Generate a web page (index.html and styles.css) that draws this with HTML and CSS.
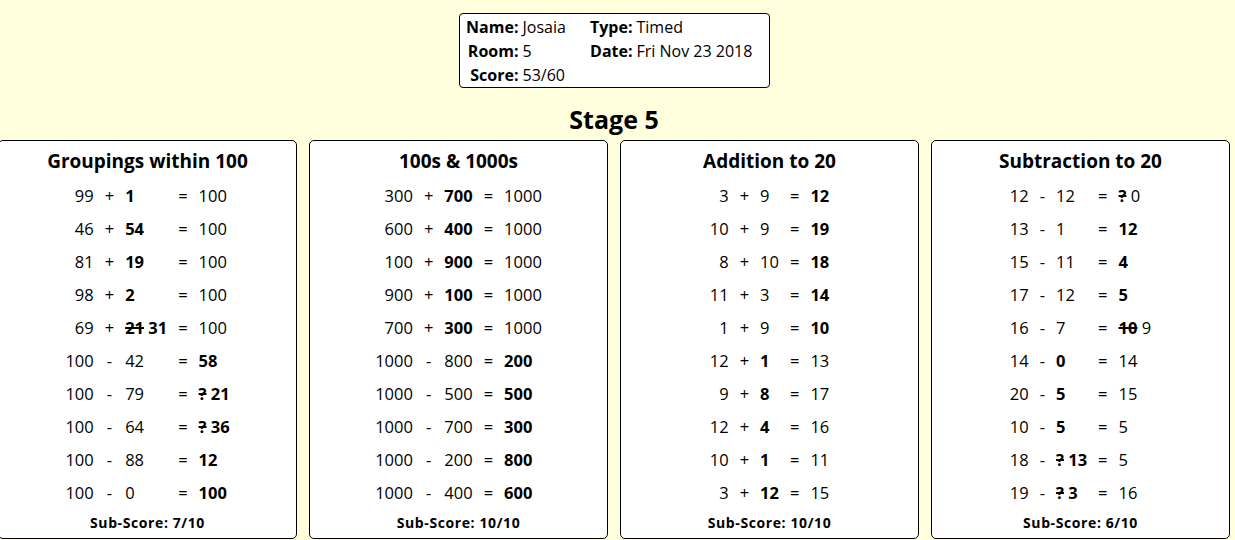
FILE: index.html
```html
<!DOCTYPE html>
<html lang="en">
<head>
<meta charset="utf-8">
<title>Stage 5 results</title>
<link rel="stylesheet" href="styles.css">
</head>
<body>
<div class="page">
  <div class="info">
    <span class="lbl">Name:</span><span class="val">Josaia</span><span class="lbl">Type:</span><span class="val">Timed</span>
    <span class="lbl">Room:</span><span class="val">5</span><span class="lbl">Date:</span><span class="val">Fri Nov 23 2018</span>
    <span class="lbl">Score:</span><span class="val">53/60</span><span></span><span></span>
  </div>
  <h1 class="stage">Stage 5</h1>
  <div class="cards">
    <section class="card">
      <h2 class="title">Groupings within 100</h2>
      <div class="sums">
        <span class="a">99</span><span class="op">+</span><span class="b"><b>1</b></span><span class="eq">=</span><span class="c">100</span>
        <span class="a">46</span><span class="op">+</span><span class="b"><b>54</b></span><span class="eq">=</span><span class="c">100</span>
        <span class="a">81</span><span class="op">+</span><span class="b"><b>19</b></span><span class="eq">=</span><span class="c">100</span>
        <span class="a">98</span><span class="op">+</span><span class="b"><b>2</b></span><span class="eq">=</span><span class="c">100</span>
        <span class="a">69</span><span class="op">+</span><span class="b"><b><s>21</s> 31</b></span><span class="eq">=</span><span class="c">100</span>
        <span class="a">100</span><span class="op">-</span><span class="b">42</span><span class="eq">=</span><span class="c"><b>58</b></span>
        <span class="a">100</span><span class="op">-</span><span class="b">79</span><span class="eq">=</span><span class="c"><b><s>?</s> 21</b></span>
        <span class="a">100</span><span class="op">-</span><span class="b">64</span><span class="eq">=</span><span class="c"><b><s>?</s> 36</b></span>
        <span class="a">100</span><span class="op">-</span><span class="b">88</span><span class="eq">=</span><span class="c"><b>12</b></span>
        <span class="a">100</span><span class="op">-</span><span class="b">0</span><span class="eq">=</span><span class="c"><b>100</b></span>
      </div>
      <p class="sub">Sub-Score: 7/10</p>
    </section>
    <section class="card">
      <h2 class="title">100s &amp; 1000s</h2>
      <div class="sums">
        <span class="a">300</span><span class="op">+</span><span class="b"><b>700</b></span><span class="eq">=</span><span class="c">1000</span>
        <span class="a">600</span><span class="op">+</span><span class="b"><b>400</b></span><span class="eq">=</span><span class="c">1000</span>
        <span class="a">100</span><span class="op">+</span><span class="b"><b>900</b></span><span class="eq">=</span><span class="c">1000</span>
        <span class="a">900</span><span class="op">+</span><span class="b"><b>100</b></span><span class="eq">=</span><span class="c">1000</span>
        <span class="a">700</span><span class="op">+</span><span class="b"><b>300</b></span><span class="eq">=</span><span class="c">1000</span>
        <span class="a">1000</span><span class="op">-</span><span class="b">800</span><span class="eq">=</span><span class="c"><b>200</b></span>
        <span class="a">1000</span><span class="op">-</span><span class="b">500</span><span class="eq">=</span><span class="c"><b>500</b></span>
        <span class="a">1000</span><span class="op">-</span><span class="b">700</span><span class="eq">=</span><span class="c"><b>300</b></span>
        <span class="a">1000</span><span class="op">-</span><span class="b">200</span><span class="eq">=</span><span class="c"><b>800</b></span>
        <span class="a">1000</span><span class="op">-</span><span class="b">400</span><span class="eq">=</span><span class="c"><b>600</b></span>
      </div>
      <p class="sub">Sub-Score: 10/10</p>
    </section>
    <section class="card">
      <h2 class="title">Addition to 20</h2>
      <div class="sums">
        <span class="a">3</span><span class="op">+</span><span class="b">9</span><span class="eq">=</span><span class="c"><b>12</b></span>
        <span class="a">10</span><span class="op">+</span><span class="b">9</span><span class="eq">=</span><span class="c"><b>19</b></span>
        <span class="a">8</span><span class="op">+</span><span class="b">10</span><span class="eq">=</span><span class="c"><b>18</b></span>
        <span class="a">11</span><span class="op">+</span><span class="b">3</span><span class="eq">=</span><span class="c"><b>14</b></span>
        <span class="a">1</span><span class="op">+</span><span class="b">9</span><span class="eq">=</span><span class="c"><b>10</b></span>
        <span class="a">12</span><span class="op">+</span><span class="b"><b>1</b></span><span class="eq">=</span><span class="c">13</span>
        <span class="a">9</span><span class="op">+</span><span class="b"><b>8</b></span><span class="eq">=</span><span class="c">17</span>
        <span class="a">12</span><span class="op">+</span><span class="b"><b>4</b></span><span class="eq">=</span><span class="c">16</span>
        <span class="a">10</span><span class="op">+</span><span class="b"><b>1</b></span><span class="eq">=</span><span class="c">11</span>
        <span class="a">3</span><span class="op">+</span><span class="b"><b>12</b></span><span class="eq">=</span><span class="c">15</span>
      </div>
      <p class="sub">Sub-Score: 10/10</p>
    </section>
    <section class="card">
      <h2 class="title">Subtraction to 20</h2>
      <div class="sums">
        <span class="a">12</span><span class="op">-</span><span class="b">12</span><span class="eq">=</span><span class="c"><b><s>?</s></b> 0</span>
        <span class="a">13</span><span class="op">-</span><span class="b">1</span><span class="eq">=</span><span class="c"><b>12</b></span>
        <span class="a">15</span><span class="op">-</span><span class="b">11</span><span class="eq">=</span><span class="c"><b>4</b></span>
        <span class="a">17</span><span class="op">-</span><span class="b">12</span><span class="eq">=</span><span class="c"><b>5</b></span>
        <span class="a">16</span><span class="op">-</span><span class="b">7</span><span class="eq">=</span><span class="c"><b><s>10</s></b> 9</span>
        <span class="a">14</span><span class="op">-</span><span class="b"><b>0</b></span><span class="eq">=</span><span class="c">14</span>
        <span class="a">20</span><span class="op">-</span><span class="b"><b>5</b></span><span class="eq">=</span><span class="c">15</span>
        <span class="a">10</span><span class="op">-</span><span class="b"><b>5</b></span><span class="eq">=</span><span class="c">5</span>
        <span class="a">18</span><span class="op">-</span><span class="b"><b><s>?</s> 13</b></span><span class="eq">=</span><span class="c">5</span>
        <span class="a">19</span><span class="op">-</span><span class="b"><b><s>?</s> 3</b></span><span class="eq">=</span><span class="c">16</span>
      </div>
      <p class="sub">Sub-Score: 6/10</p>
    </section>
  </div>
</div>
</body>
</html>
```

FILE: styles.css
```css
html {
  background: #ffffdd;
  overflow: hidden;
}

body {
  margin: 0;
  font-family: "Open Sans", "DejaVu Sans", sans-serif;
  color: #000;
  font-size: 16px;
}

.page {
  width: 1232px;
  margin-left: -2px;
  display: flex;
  flex-direction: column;
  align-items: center;
}

.info {
  margin-top: 13px;
  width: 311px;
  box-sizing: border-box;
  background: #fff;
  border: 1px solid #000;
  border-radius: 4px;
  padding: 1px 0 0 0;
  height: 75px;
  display: grid;
  grid-template-columns: 59px 60px 46px 1fr;
  grid-auto-rows: 24px;
  column-gap: 4px;
  align-items: center;
  line-height: 24px;
}

.info .lbl {
  font-weight: 700;
  text-align: right;
}

.info .val {
  text-align: left;
  white-space: nowrap;
}

.stage {
  margin: 16px 0 0 0;
  font-size: 25px;
  line-height: 30px;
  font-weight: 700;
}

.cards {
  margin-top: 6px;
  width: 100%;
  display: flex;
  gap: 12px;
}

.card {
  flex: 0 0 299px;
  height: 399px;
  box-sizing: border-box;
  background: #fff;
  border: 1px solid #000;
  border-radius: 5px;
  padding-top: 7px;
  display: flex;
  flex-direction: column;
  align-items: center;
}

.title {
  margin: 0;
  font-size: 19px;
  line-height: 26px;
  font-weight: 700;
}

.sums {
  margin-top: 5px;
  display: grid;
  grid-template-columns: repeat(5, auto);
  grid-auto-rows: 33px;
  align-items: center;
  line-height: 20px;
  font-size: 16.5px;
}

.sums > span {
  padding: 0 5px;
  white-space: nowrap;
}

.sums .a { text-align: right; }
.sums .op { text-align: center; padding: 0 6px; }
.sums .b { text-align: left; }
.sums .eq { text-align: center; padding: 0 6px; }
.sums .c { text-align: left; }

.sums b {
  font-weight: 700;
}

.sums s {
  text-decoration: line-through;
  text-decoration-thickness: 2px;
}

.sub {
  margin: 4px 0 0 0;
  font-size: 14px;
  line-height: 20px;
  font-weight: 700;
  letter-spacing: 0.6px;
}
```
